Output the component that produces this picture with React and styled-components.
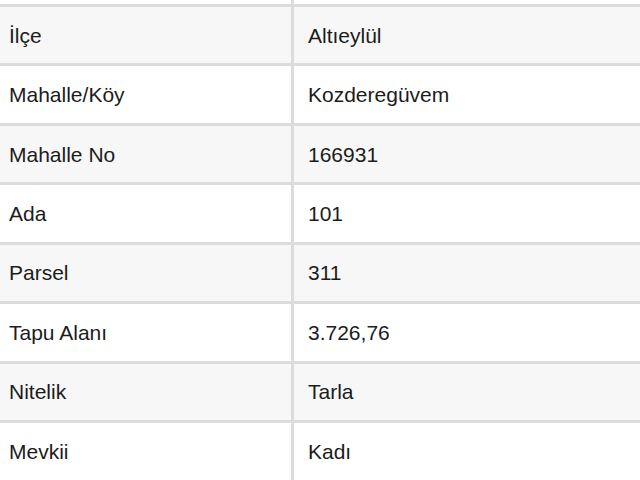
import React from 'react';
import styled, { createGlobalStyle } from 'styled-components';

const GlobalStyle = createGlobalStyle`
  html, body {
    margin: 0;
    padding: 0;
    background: #ffffff;
  }
  body {
    font-family: 'Liberation Sans', Arial, sans-serif;
    color: #1c1c1c;
  }
`;

const StyledTable = styled.div`
  display: grid;
  grid-template-columns: 291px 1fr;
  grid-template-rows: 4px;
  grid-auto-rows: 56.45px;
  column-gap: 3px;
  row-gap: 3px;
  background-color: #dcdcdc;
  width: 640px;
  height: 480px;
  overflow: hidden;
`;

const Cell = styled.div`
  display: flex;
  align-items: center;
  background-color: ${({ $shaded }) => ($shaded ? '#f7f7f7' : '#ffffff')};
  padding-left: ${({ $value }) => ($value ? '14px' : '9px')};
  font-size: 21px;
  line-height: 1;
  white-space: nowrap;
`;

// bottom sliver of the row scrolled above the view
const TopCell = styled.div`
  background-color: #ffffff;
`;

const rows = [
  ['İlçe', 'Altıeylül'],
  ['Mahalle/Köy', 'Kozderegüvem'],
  ['Mahalle No', '166931'],
  ['Ada', '101'],
  ['Parsel', '311'],
  ['Tapu Alanı', '3.726,76'],
  ['Nitelik', 'Tarla'],
  ['Mevkii', 'Kadı'],
];

const App = () => {
  return (
    <>
      <GlobalStyle />
      <StyledTable>
        <TopCell />
        <TopCell />
        {rows.map(([label, value], i) => (
          <React.Fragment key={label}>
            <Cell $shaded={i % 2 === 0}>{label}</Cell>
            <Cell $shaded={i % 2 === 0} $value>
              {value}
            </Cell>
          </React.Fragment>
        ))}
      </StyledTable>
    </>
  );
};

export default App;
